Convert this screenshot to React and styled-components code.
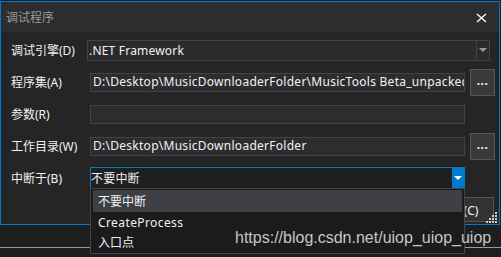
import React from 'react'
import styled, { createGlobalStyle } from 'styled-components'

const GlobalStyle = createGlobalStyle`
  html, body {
    margin: 0;
    padding: 0;
    background: #1e1e1e;
  }
  * {
    box-sizing: border-box;
  }
`

const font = `"Noto Sans", "Noto Sans CJK SC", sans-serif`

const Screen = styled.div`
  position: relative;
  width: 501px;
  height: 257px;
  overflow: hidden;
  background: #1e1e1e;
  font-family: ${font};
  font-size: 12px;
  color: #f1f1f1;
`

const Window = styled.div`
  display: flex;
  flex-direction: column;
  width: 500px;
  height: 224px;
  margin-top: 1px;
  border: 1px solid #007acc;
  background: #252526;
`

const TitleBar = styled.div`
  display: flex;
  align-items: center;
  justify-content: space-between;
  height: 30px;
  flex: none;
  padding: 0 12px 0 5px;
  background: #2d2d30;
  color: #999999;
  font-size: 12px;
`

const CloseIcon = styled.svg`
  display: block;
  margin-top: 1px;
`

const Body = styled.div`
  position: relative;
  flex: 1;
  display: flex;
  flex-direction: column;
  padding: 2px 0 0 10px;
`

const Row = styled.div`
  display: flex;
  align-items: center;
  height: 32px;
`

const Label = styled.div`
  width: 76px;
  flex: none;
  white-space: nowrap;
`

const Combo = styled.div`
  position: relative;
  display: flex;
  align-items: center;
  width: ${p => p.$width}px;
  height: ${p => p.$height}px;
  margin-left: ${p => p.$offset || 0}px;
  border: 1px solid ${p => (p.$focused ? '#007acc' : '#434346')};
  background: ${p => (p.$focused ? '#1f1f20' : '#2b2b2d')};
`

const ComboText = styled.div`
  flex: 1;
  padding-left: ${p => p.$pad}px;
  white-space: nowrap;
  overflow: hidden;
  letter-spacing: 0.2px;
`

const ArrowBox = styled.div`
  display: flex;
  align-items: center;
  justify-content: center;
  align-self: stretch;
  width: ${p => p.$width}px;
  border-left: ${p => (p.$focused ? 'none' : '1px solid #434346')};
  background: ${p => (p.$focused ? '#007acc' : 'transparent')};
`

const Arrow = styled.div`
  width: 0;
  height: 0;
  border-left: 4px solid transparent;
  border-right: 4px solid transparent;
  border-top: 4px solid ${p => (p.$focused ? '#ffffff' : '#999999')};
`

const TextBox = styled.div`
  width: 375px;
  height: 19px;
  margin-left: 3px;
  padding-left: 2px;
  border: 1px solid #434346;
  background: #2d2d30;
  white-space: nowrap;
  overflow: hidden;
  line-height: 16px;
  letter-spacing: 0.27px;
`

const BrowseButton = styled.div`
  display: flex;
  align-items: center;
  justify-content: center;
  width: 25px;
  height: 27px;
  margin-left: 5px;
  border: 1px solid #555558;
  background: #3a3a3d;
  font-weight: bold;
  letter-spacing: 0.5px;
  padding-bottom: 4px;
`

const Footer = styled.div`
  display: flex;
  justify-content: flex-end;
  padding: 3px 5px 0 0;
`

const FooterButton = styled.div`
  display: flex;
  align-items: center;
  justify-content: center;
  width: 70px;
  height: 25px;
  border: 1px solid #555558;
  background: #333337;
`

const Grip = styled.svg`
  position: absolute;
  right: 1px;
  bottom: 0;
`

const DropList = styled.div`
  position: absolute;
  top: 100%;
  left: -1px;
  right: -1px;
  height: 66px;
  padding: 1px 2px;
  border: 1px solid #434346;
  background: #1b1b1c;
  z-index: 2;
`

const DropItem = styled.div`
  display: flex;
  align-items: center;
  height: ${p => (p.$active ? 22 : 20)}px;
  padding-left: 5px;
  background: ${p => (p.$active ? '#3f3f46' : 'transparent')};
  letter-spacing: ${p => (p.$latin ? '0.4px' : '0')};
`

const Behind = styled.div`
  padding-top: 22px;
`

const BehindLine = styled.div`
  height: 1px;
  background: #9a9a9a;
`

const Watermark = styled.div`
  position: absolute;
  left: 235px;
  top: 229px;
  font-family: "Liberation Sans", Arial, sans-serif;
  font-size: 16px;
  color: #c6c6c6;
  white-space: nowrap;
  z-index: 3;
`

const breakOptions = ['不要中断', 'CreateProcess', '入口点']

const PathRow = ({ label, value }) => (
  <Row>
    <Label>{label}</Label>
    <TextBox>{value}</TextBox>
    <BrowseButton>...</BrowseButton>
  </Row>
)

const App = () => {
  const dots = []
  for (let r = 0; r < 4; r++) {
    for (let c = 3 - r; c < 4; c++) {
      dots.push(<rect key={`${r}-${c}`} x={c * 3} y={r * 3} width="2" height="2" fill="#d0d0d0" />)
    }
  }

  return (
    <Screen>
      <GlobalStyle />
      <Window>
        <TitleBar>
          <span>调试程序</span>
          <CloseIcon width="11" height="10" viewBox="0 0 11 10">
            <path d="M1 1 L10 9 M10 1 L1 9" stroke="#f1f1f1" strokeWidth="1.6" fill="none" />
          </CloseIcon>
        </TitleBar>
        <Body>
          <Row>
            <Label>调试引擎(D)</Label>
            <Combo $width={403} $height={21}>
              <ComboText $pad={1}>.NET Framework</ComboText>
              <ArrowBox $width={13}>
                <Arrow />
              </ArrowBox>
            </Combo>
          </Row>
          <PathRow label="程序集(A)" value="D:\Desktop\MusicDownloaderFolder\MusicTools Beta_unpacked" />
          <Row>
            <Label>参数(R)</Label>
            <TextBox />
          </Row>
          <PathRow label="工作目录(W)" value="D:\Desktop\MusicDownloaderFolder" />
          <Row>
            <Label>中断于(B)</Label>
            <Combo $width={375} $height={22} $offset={3} $focused>
              <ComboText $pad={0}>不要中断</ComboText>
              <ArrowBox $width={12} $focused>
                <Arrow $focused />
              </ArrowBox>
              <DropList>
                {breakOptions.map((o, i) => (
                  <DropItem key={o} $active={i === 0} $latin={i === 1}>
                    {o}
                  </DropItem>
                ))}
              </DropList>
            </Combo>
          </Row>
          <Footer>
            <FooterButton>取消(C)</FooterButton>
          </Footer>
          <Grip width="12" height="12" viewBox="0 0 12 12">
            {dots}
          </Grip>
        </Body>
      </Window>
      <Behind>
        <BehindLine />
      </Behind>
      <Watermark>https://blog.csdn.net/uiop_uiop_uiop</Watermark>
    </Screen>
  )
}

export default App
